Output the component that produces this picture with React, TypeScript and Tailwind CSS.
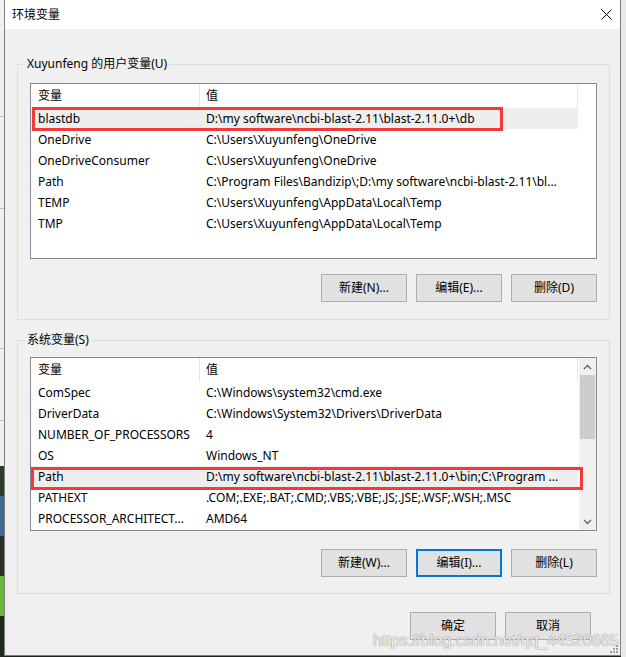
import React from 'react';

const FONT = "font-['Noto_Sans','Noto_Sans_CJK_SC',sans-serif]";

interface Row {
    name: string;
    value: string;
    selected?: boolean;
    boxed?: 'user' | 'sys';
}

const userRows: Row[] = [
    { name: 'blastdb', value: 'D:\\my software\\ncbi-blast-2.11\\blast-2.11.0+\\db', selected: true, boxed: 'user' },
    { name: 'OneDrive', value: 'C:\\Users\\Xuyunfeng\\OneDrive' },
    { name: 'OneDriveConsumer', value: 'C:\\Users\\Xuyunfeng\\OneDrive' },
    { name: 'Path', value: 'C:\\Program Files\\Bandizip\\;D:\\my software\\ncbi-blast-2.11\\bl...' },
    { name: 'TEMP', value: 'C:\\Users\\Xuyunfeng\\AppData\\Local\\Temp' },
    { name: 'TMP', value: 'C:\\Users\\Xuyunfeng\\AppData\\Local\\Temp' },
];

const sysRows: Row[] = [
    { name: 'ComSpec', value: 'C:\\Windows\\system32\\cmd.exe' },
    { name: 'DriverData', value: 'C:\\Windows\\System32\\Drivers\\DriverData' },
    { name: 'NUMBER_OF_PROCESSORS', value: '4' },
    { name: 'OS', value: 'Windows_NT' },
    { name: 'Path', value: 'D:\\my software\\ncbi-blast-2.11\\blast-2.11.0+\\bin;C:\\Program ...', selected: true, boxed: 'sys' },
    { name: 'PATHEXT', value: '.COM;.EXE;.BAT;.CMD;.VBS;.VBE;.JS;.JSE;.WSF;.WSH;.MSC' },
    { name: 'PROCESSOR_ARCHITECT...', value: 'AMD64' },
];

const Chevron: React.FC<{ down?: boolean }> = ({ down }) => (
    <svg width="9" height="6" viewBox="0 0 9 6">
        <polyline
            points={down ? '1,1 4.5,4.5 8,1' : '1,5 4.5,1.5 8,5'}
            fill="none"
            stroke="#606060"
            strokeWidth="1.3"
        />
    </svg>
);

const Table: React.FC<{ rows: Row[] }> = ({ rows }) => (
    <div className="w-[548px] flex flex-col">
        <div className="h-[24px] flex items-center text-black">
            <div className="w-[169px] h-full pl-[7px] flex items-center border-r border-[#e5e5e5]">变量</div>
            <div className="w-[378px] h-full pl-[6px] flex items-center border-r border-[#e5e5e5]">值</div>
        </div>
        {rows.map((r) => (
            <div
                key={r.name}
                className={`relative h-[21px] w-[547px] flex items-center whitespace-nowrap ${r.selected ? 'bg-[#eeeeee]' : ''}`}
            >
                <div className="w-[169px] pl-[7px] overflow-hidden">{r.name}</div>
                <div className="w-[378px] pl-[6px] overflow-hidden">{r.value}</div>
                {r.boxed === 'user' && (
                    <div className="absolute left-[1px] top-[-1px] w-[471px] h-[24px] border-[3px] border-[#f23a3a] z-10" />
                )}
                {r.boxed === 'sys' && (
                    <div className="absolute left-0 top-[1px] w-[552px] h-[23px] border-[3px] border-[#f23a3a] z-10" />
                )}
            </div>
        ))}
    </div>
);

const Btn: React.FC<{ label: string; focused?: boolean }> = ({ label, focused }) => (
    <div
        className={`w-[86px] h-[28px] flex items-center justify-center bg-[#e1e1e1] ${focused ? 'border-2 border-[#0078d7]' : 'border border-[#adadad]'}`}
    >
        {label}
    </div>
);

export default function App() {
    return (
        <div className={`w-[626px] h-[657px] flex overflow-hidden bg-[#1c241b] text-[12px] text-black ${FONT}`}>
            {/* desktop behind the dialog */}
            <div className="w-[4px] h-full flex flex-col">
                <div className="h-[117px] bg-[#f0f0f0] border-b border-[#bdbdbd]" />
                <div className="h-[92px] bg-[#f0f0f0] border-b border-[#bdbdbd]" />
                <div className="h-[140px] bg-[#f0f0f0] border-b border-[#bdbdbd]" />
                <div className="h-[72px] bg-[#f0f0f0] border-b border-[#bdbdbd]" />
                <div className="h-[45px] bg-[#f0f0f0]" />
                <div className="h-[30px] bg-[#2c3b2a]" />
                <div className="h-[40px] bg-[#41688f]" />
                <div className="h-[40px] bg-[#2b3326]" />
                <div className="h-[40px] bg-[#6bb83a]" />
                <div className="flex-1 bg-[#1f2a1c]" />
            </div>

            <div className="relative w-[617px] h-[656px] flex flex-col border-x border-b border-[#7f7f7f] bg-[#f0f0f0]">
                <div className="h-[29px] bg-white flex items-center justify-between pl-[7px] pr-[8px]">
                    <span className="text-[12px]">环境变量</span>
                    <svg width="11" height="11" viewBox="0 0 11 11">
                        <line x1="0.5" y1="0.5" x2="10.5" y2="10.5" stroke="#000" strokeWidth="1" />
                        <line x1="10.5" y1="0.5" x2="0.5" y2="10.5" stroke="#000" strokeWidth="1" />
                    </svg>
                </div>

                <div className="flex-1 flex flex-col pl-[12px] pr-[10px] pt-[27px]">
                    <fieldset className="border border-[#dcdcdc] px-[12px] pb-[17px]">
                        <legend className="ml-[-5px] px-[2px] h-[16px] leading-[16px]">Xuyunfeng 的用户变量(U)</legend>
                        <div className="mt-[11px] h-[176px] border border-[#828790] bg-white">
                            <Table rows={userRows} />
                        </div>
                        <div className="mt-[15px] flex justify-end gap-[9px]">
                            <Btn label="新建(N)..." />
                            <Btn label="编辑(E)..." />
                            <Btn label="删除(D)" />
                        </div>
                    </fieldset>

                    <fieldset className="mt-[12px] border border-[#dcdcdc] px-[12px] pb-[16px]">
                        <legend className="ml-[-5px] px-[2px] h-[16px] leading-[16px]">系统变量(S)</legend>
                        <div className="mt-[9px] h-[174px] border border-[#828790] bg-white flex">
                            <Table rows={sysRows} />
                            <div className="w-[17px] bg-[#f0f0f0] flex flex-col">
                                <div className="h-[17px] flex items-center justify-center">
                                    <Chevron />
                                </div>
                                <div className="h-[64px] mx-[1px] bg-[#cdcdcd]" />
                                <div className="flex-1" />
                                <div className="h-[17px] flex items-center justify-center">
                                    <Chevron down />
                                </div>
                            </div>
                        </div>
                        <div className="mt-[18px] flex justify-end gap-[9px]">
                            <Btn label="新建(W)..." />
                            <Btn label="编辑(I)..." focused />
                            <Btn label="删除(L)" />
                        </div>
                    </fieldset>

                    <div className="mt-[18px] flex justify-end gap-[9px] pr-[19px]">
                        <Btn label="确定" />
                        <Btn label="取消" />
                    </div>
                </div>

                <div className="absolute left-[368px] top-[629px] text-[16px] font-['Liberation_Sans',sans-serif] text-white/85 [text-shadow:0_0_1px_#8a8a8a,0_0_1px_#8a8a8a] whitespace-nowrap">
                    https://blog.csdn.net/qq_44520665
                </div>
                <svg className="absolute right-[2px] bottom-[2px]" width="8" height="8" viewBox="0 0 8 8">
                    <rect x="6" y="0" width="2" height="2" fill="#a0a0a0" />
                    <rect x="3" y="3" width="2" height="2" fill="#a0a0a0" />
                    <rect x="6" y="3" width="2" height="2" fill="#a0a0a0" />
                    <rect x="0" y="6" width="2" height="2" fill="#a0a0a0" />
                    <rect x="3" y="6" width="2" height="2" fill="#a0a0a0" />
                    <rect x="6" y="6" width="2" height="2" fill="#a0a0a0" />
                </svg>
            </div>

            <div className="flex-1 h-full bg-[#e9e9e9]" />
        </div>
    );
}
